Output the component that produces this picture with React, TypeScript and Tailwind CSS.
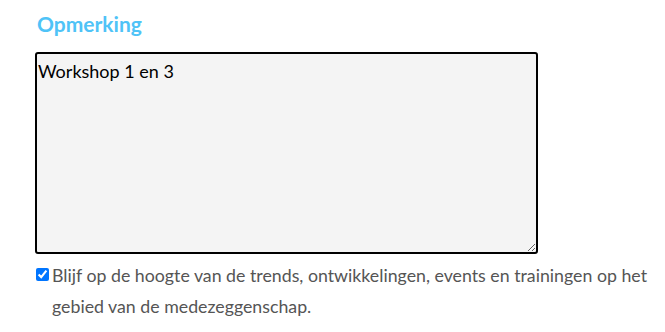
export default function App() {
  return (
    <div className="h-[332px] w-[665px] bg-white font-['Lato',sans-serif]">
      <div className="flex flex-col pl-[35px] pr-[8px] pt-[11px]">
        <h2 className="pl-[2px] text-[21px] font-bold leading-[26px] text-[#4fc3f7]">
          Opmerking
        </h2>
        <textarea
          className="mt-[15px] h-[202px] w-[503px] rounded-[3px] border-2 border-black bg-[#f4f4f4] px-[1px] py-[6px] text-[18px] leading-[22px] text-black outline-none"
          defaultValue="Workshop 1 en 3"
        />
        <label className="mt-[6px] flex items-start gap-[3px] text-[17.75px] leading-[31px] text-[#555555]">
          <input
            type="checkbox"
            defaultChecked
            className="ml-[1px] mt-[8px] size-[13px] shrink-0 accent-[#0075ff]"
          />
          <span>
            Blijf op de hoogte van de trends, ontwikkelingen, events en
            trainingen op het gebied van de medezeggenschap.
          </span>
        </label>
      </div>
    </div>
  );
}
